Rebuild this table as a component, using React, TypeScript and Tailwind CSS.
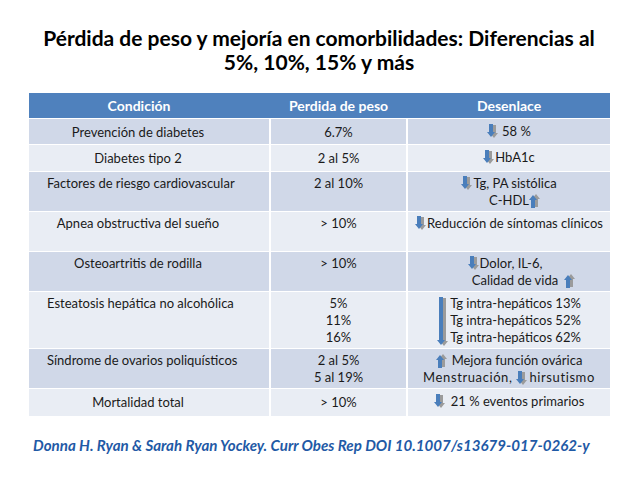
import React from 'react'

// block arrow (blue with a grey shadow), like the PowerPoint clip art
function Arrow({ dir = 'down', h = 14 }: { dir?: 'down' | 'up'; h?: number }) {
  const w = 12
  const head = 5
  const shape = (dx: number, dy: number) => {
    const pts = [
      [dx + 2, dy + 0],
      [dx + 6, dy + 0],
      [dx + 6, dy + h - head - 1],
      [dx + 8, dy + h - head - 1],
      [dx + 4, dy + h - 1],
      [dx + 0, dy + h - head - 1],
      [dx + 2, dy + h - head - 1],
    ]
    return pts.map(p => p.join(',')).join(' ')
  }
  return (
    <svg
      width={w}
      height={h + 1}
      viewBox={`0 0 ${w} ${h + 1}`}
      className={`inline-block align-middle shrink-0 ${dir === 'up' ? '-scale-y-100' : ''}`}
    >
      <polygon points={shape(3, 1)} fill="#9b9b9b" />
      <polygon points={shape(0, 0)} fill="#4a7ebb" />
    </svg>
  )
}

type Row = {
  cond: string
  left?: boolean
  short?: boolean
  peso: React.ReactNode
  desenlace: React.ReactNode
  h: string
  dark: boolean
}

const rows: Row[] = [
  {
    cond: 'Prevención de diabetes',
    short: true,
    peso: '6.7%',
    desenlace: (
      <div className="flex items-center gap-[3px]"><Arrow /><span>58 %</span></div>
    ),
    h: 'h-[25px]',
    dark: true,
  },
  {
    cond: 'Diabetes tipo 2',
    short: true,
    peso: '2 al 5%',
    desenlace: (
      <div className="flex items-center"><Arrow /><span>HbA1c</span></div>
    ),
    h: 'h-[26px]',
    dark: false,
  },
  {
    cond: 'Factores de riesgo cardiovascular',
    left: true,
    peso: '2 al 10%',
    desenlace: (
      <div className="flex flex-col items-center">
        <div className="flex items-center"><Arrow /><span>Tg, PA sistólica</span></div>
        <div className="flex items-center pl-[12px]"><span>C-HDL</span><Arrow dir="up" /></div>
      </div>
    ),
    h: 'h-[39px]',
    dark: true,
  },
  {
    cond: 'Apnea obstructiva del sueño',
    peso: '> 10%',
    desenlace: (
      <div className="flex items-center"><Arrow /><span>Reducción de síntomas clínicos</span></div>
    ),
    h: 'h-[39px]',
    dark: false,
  },
  {
    cond: 'Osteoartritis de rodilla',
    peso: '> 10%',
    desenlace: (
      <div className="flex flex-col items-center">
        <div className="flex items-center pr-[8px]"><Arrow /><span>Dolor, IL-6,</span></div>
        <div className="flex items-center gap-[6px] pl-[30px]"><span>Calidad de vida</span><Arrow dir="up" /></div>
      </div>
    ),
    h: 'h-[39px]',
    dark: true,
  },
  {
    cond: 'Esteatosis hepática no alcohólica',
    left: true,
    peso: (
      <>
        <div>5%</div>
        <div>11%</div>
        <div>16%</div>
      </>
    ),
    desenlace: (
      <div className="flex items-start gap-[1px]">
        <div className="pt-[2px]"><Arrow h={49} /></div>
        <div className="flex flex-col">
          <span>Tg intra-hepáticos 13%</span>
          <span>Tg intra-hepáticos 52%</span>
          <span>Tg intra-hepáticos 62%</span>
        </div>
      </div>
    ),
    h: 'h-[56px]',
    dark: false,
  },
  {
    cond: 'Síndrome de ovarios poliquísticos',
    left: true,
    peso: (
      <>
        <div>2 al 5%</div>
        <div>5 al 19%</div>
      </>
    ),
    desenlace: (
      <div className="flex flex-col items-center">
        <div className="flex items-center gap-[4px]"><Arrow dir="up" /><span>Mejora función ovárica</span></div>
        <div className="flex items-center tracking-[0.6px]">
          <span className="whitespace-pre">Menstruación, </span>
          <span className="pr-[1px]"><Arrow /></span>
          <span>hirsutismo</span>
        </div>
      </div>
    ),
    h: 'h-[39px]',
    dark: true,
  },
  {
    cond: 'Mortalidad total',
    short: true,
    peso: '> 10%',
    desenlace: (
      <div className="flex items-center gap-[5px]"><Arrow /><span>21 % eventos primarios</span></div>
    ),
    h: 'h-[27px]',
    dark: false,
  },
]

export default function App() {
  return (
    <div className="w-[638px] h-[479px] bg-white overflow-hidden font-['Lato','Liberation_Sans',sans-serif]">
      <h1 className="pt-[26px] text-center text-[21px] leading-[24px] font-bold text-black">
        Pérdida de peso y mejoría en comorbilidades: Diferencias al
        <br />
        5%, 10%, 15% y más
      </h1>

      <div className="mt-[19px] ml-[29px] w-[581px] flex flex-col gap-y-px text-[13px] leading-[17px] text-[#1a1a1a]">
        <div className="grid grid-cols-[240px_135px_202px] gap-x-[2px] h-[25px] bg-[#4f81bd] text-white font-bold text-[14px]">
          <div className="flex items-center justify-center pr-[20px]">Condición</div>
          <div className="flex items-center justify-center">Perdida de peso</div>
          <div className="flex items-center justify-center">Desenlace</div>
        </div>

        {rows.map(r => {
          const bg = r.dark ? 'bg-[#d0d8e8]' : 'bg-[#e9edf4]'
          const pt = r.short ? 'pt-[5px]' : 'pt-[3px]'
          return (
            <div key={r.cond} className={`grid grid-cols-[240px_135px_202px] gap-x-[2px] ${r.h}`}>
              <div className={`${bg} ${pt} whitespace-nowrap ${r.left ? 'pl-[18px]' : 'text-center pr-[22px]'}`}>
                {r.cond}
              </div>
              <div className={`${bg} ${pt} text-center`}>{r.peso}</div>
              <div className={`${bg} ${r.short ? 'pt-[4px]' : 'pt-[3px]'} flex items-start justify-center whitespace-nowrap`}>{r.desenlace}</div>
            </div>
          )
        })}
      </div>

      <p className="mt-[19px] ml-[33px] text-[15.1px] leading-[20px] font-bold italic text-[#1f5aa6]">
        Donna H. Ryan &amp; Sarah Ryan Yockey. Curr Obes Rep DOI 10.1007/s13679-017-0262-y
      </p>
    </div>
  )
}
